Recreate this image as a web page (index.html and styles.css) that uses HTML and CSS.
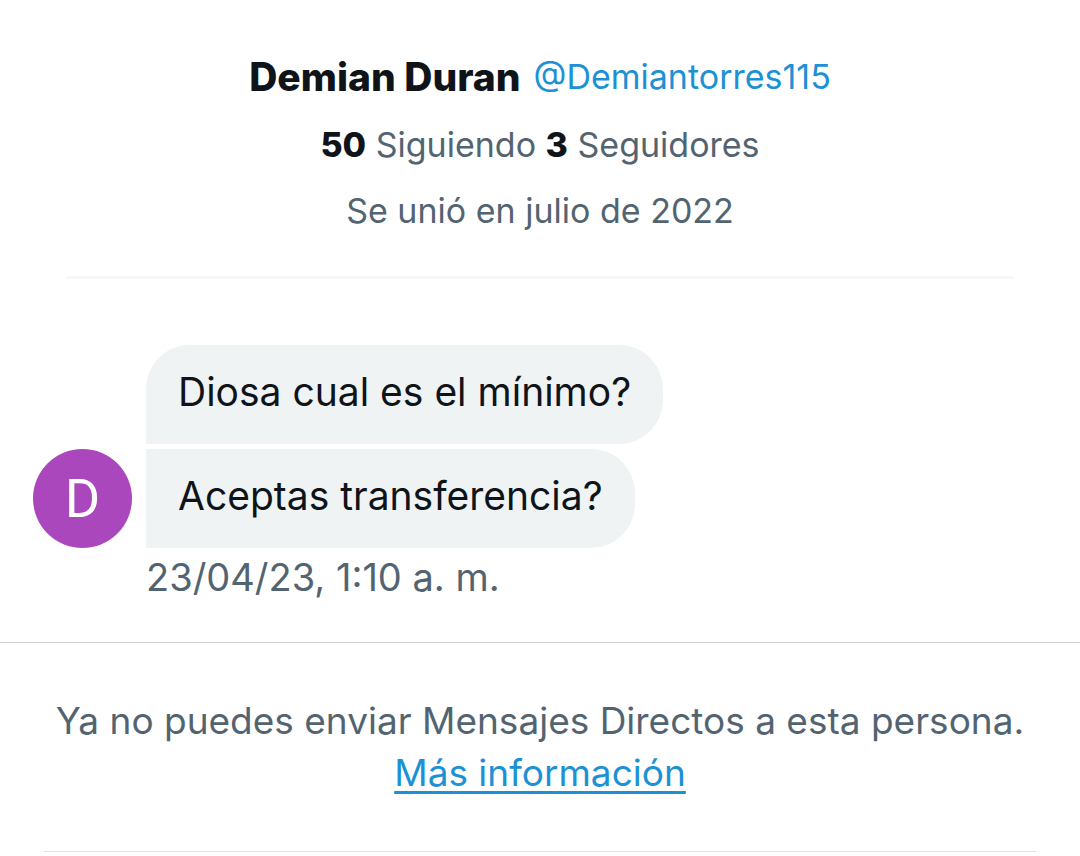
FILE: index.html
```html
<!DOCTYPE html>
<html lang="es">
<head>
    <meta charset="UTF-8">
    <meta name="viewport" content="width=device-width, initial-scale=1.0">
    <title>Demian Duran</title>
    <link rel="stylesheet" href="styles.css">
</head>
<body>
    <header class="profile">
        <div class="profile-title">
            <h1>Demian Duran</h1>
            <a href="#profile">@Demiantorres115</a>
        </div>
        <p class="profile-stats"><b>50</b> Siguiendo <b>3</b> Seguidores</p>
        <p class="profile-joined">Se unió en julio de 2022</p>
    </header>

    <main class="conversation">
        <div class="avatar">D</div>
        <div class="messages">
            <p class="bubble">Diosa cual es el mínimo?</p>
            <p class="bubble">Aceptas transferencia?</p>
        </div>
        <time class="sent-at" datetime="2023-04-23T01:10">23/04/23, 1:10 a. m.</time>
    </main>

    <footer class="notice">
        <div class="notice-text">
            <p>Ya no puedes enviar Mensajes Directos a esta persona.</p>
            <a href="#info">Más información</a>
        </div>
    </footer>
</body>
</html>
```

FILE: styles.css
```css
* {
    box-sizing: border-box;
}
body {
    margin: 0;
    background-color: #fff;
    color: #0f1419;
    font-family: Inter, "Liberation Sans", sans-serif;
}
h1, p {
    margin: 0;
}
a {
    color: #1d91d5;
}

.profile {
    margin: 0 66px;
    padding: 50px 0 38px;
    border-bottom: 3px solid #f7f8f8;
    color: #536471;
    font-size: 34px;
    line-height: 54px;
    text-align: center;
}
.profile-title {
    display: flex;
    flex-wrap: wrap;
    justify-content: center;
    column-gap: 13px;
}
.profile-title h1 {
    color: #0f1419;
    font-size: 39px;
    font-weight: 800;
}
.profile-title a {
    text-decoration: none;
}
.profile-stats {
    margin: 14px 0 12px;
}
.profile-stats b {
    color: #0f1419;
    font-weight: 800;
}

.conversation {
    display: grid;
    grid-template-columns: 99px 1fr;
    column-gap: 14px;
    align-items: end;
    padding: 66px 33px 38px;
}
.avatar {
    width: 99px;
    height: 99px;
    border-radius: 50%;
    background-color: #ab47bc;
    color: #fff;
    font-family: Roboto, sans-serif;
    font-size: 54px;
    line-height: 99px;
    text-align: center;
}
.messages {
    display: flex;
    flex-direction: column;
    align-items: flex-start;
    gap: 5px;
}
.bubble {
    padding: 20px 32px 25px;
    border-radius: 44px 44px 44px 0;
    background-color: #eff3f4;
    font-size: 39px;
    line-height: 54px;
}
.bubble + .bubble {
    border-top-left-radius: 0;
}
.sent-at {
    grid-column: 2;
    margin-top: 2px;
    color: #536471;
    font-size: 38px;
    line-height: 54px;
}

.notice {
    padding: 0 44px;
    border-top: 1px solid #cfd4d7;
}
.notice-text {
    padding: 52px 0;
    border-bottom: 1px solid #dfe3e5;
    color: #536471;
    font-size: 37px;
    line-height: 52px;
    text-align: center;
}
.notice a {
    text-decoration-thickness: 3px;
    text-underline-offset: 5px;
}
```
